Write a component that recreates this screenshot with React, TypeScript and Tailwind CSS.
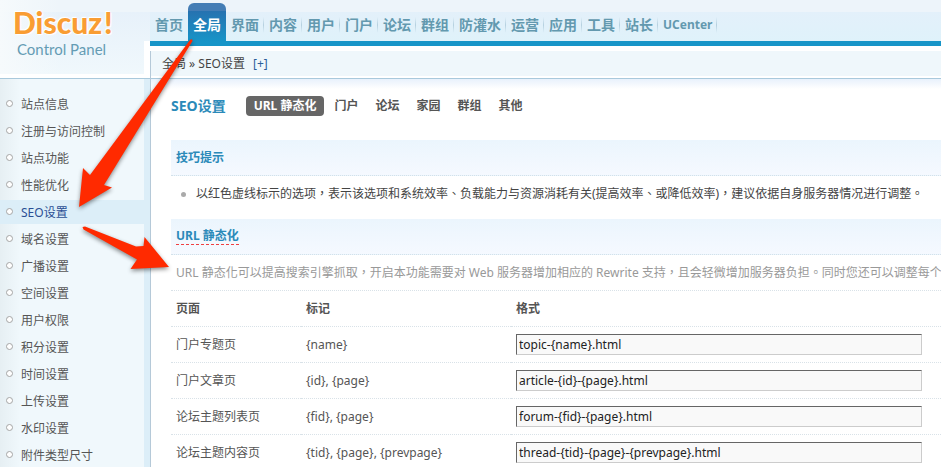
import React from "react";

const navItems = ["首页", "全局", "界面", "内容", "用户", "门户", "论坛", "群组", "防灌水", "运营", "应用", "工具", "站长", "UCenter"];

const menuItems = [
  "站点信息", "注册与访问控制", "站点功能", "性能优化", "SEO设置", "域名设置", "广播设置",
  "空间设置", "用户权限", "积分设置", "时间设置", "上传设置", "水印设置", "附件类型尺寸",
];

const tabs = ["URL 静态化", "门户", "论坛", "家园", "群组", "其他"];

const rules = [
  { page: "门户专题页", tags: "{name}", format: "topic-{name}.html" },
  { page: "门户文章页", tags: "{id}, {page}", format: "article-{id}-{page}.html" },
  { page: "论坛主题列表页", tags: "{fid}, {page}", format: "forum-{fid}-{page}.html" },
  { page: "论坛主题内容页", tags: "{tid}, {page}, {prevpage}", format: "thread-{tid}-{page}-{prevpage}.html" },
];

function Logo() {
  return (
    <div className="h-[78px] shrink-0 border-b-4 border-white pl-[13px] pt-1 font-[Lato,sans-serif] [background:linear-gradient(#fff,#fff)_144px_41px/6px_37px_no-repeat,linear-gradient(to_right,#f6fafc,transparent_60px),linear-gradient(#eef5fa_12px,#e7f1fa_12px,#f0f8fc)]">
      <div className="flex gap-0.5 text-3xl font-black leading-9 text-[#f99d33] [text-shadow:0_0_2px_#fff,0_0_3px_#fff,1px_1px_0_#fff,-1px_-1px_0_#fff]">
        <span>Discuz</span>
        <span>!</span>
      </div>
      <div className="pl-1 text-[15px] leading-[18px] text-[#649cb4]">Control Panel</div>
    </div>
  );
}

function Sidebar() {
  return (
    <aside className="flex w-[150px] shrink-0 flex-col">
      <Logo />
      <nav aria-label="全局" className="min-h-0 flex-1 border-t border-[#a9c9dc] bg-[#dceef8]">
        <ul className="h-full pt-[13px] [background:linear-gradient(to_right,#e6eff3,#f0f8fc_20px,#f0f8fc_144px,transparent_144px)]">
          {menuItems.map((item) => {
            const active = item === "SEO设置";
            return (
              <li key={item} className={active ? "mb-[3px] bg-[#dceef8]" : "mb-[3px]"}>
                <a href="#" className={`flex h-6 items-center gap-2 pl-1.5 pt-0.5 ${active ? "text-[#2b4e94]" : "text-[#555]"}`}>
                  <span className="mb-1 size-[7px] rounded-full border border-[#a5a5a5] bg-white" />
                  {item}
                </a>
              </li>
            );
          })}
        </ul>
      </nav>
    </aside>
  );
}

function TopNav() {
  return (
    <nav aria-label="主导航" className="h-[46px] border-b-[5px] border-[#1795c8] [background:linear-gradient(#edf4fa_12px,#e3f0fa_12px,#dff2fa_41px)]">
      <ul className="flex pt-[3px] text-sm font-bold">
        {navItems.map((item, i) => {
          const active = i === 1;
          return (
            <li
              key={item}
              className={
                active
                  ? "h-[43px] rounded-t-md text-white [background:linear-gradient(#447db5_8px,#2672b0_8px,#1795c8_39px)]"
                  : "h-[43px] text-[#6399af]"
              }
            >
              <a href="#" className={`flex h-full items-center gap-1 whitespace-nowrap pl-[5px] ${item === "UCenter" ? "text-xs" : ""}`}>
                {item}
                <span className={i < 2 ? "h-4 w-px" : "h-4 w-px bg-linear-to-b from-transparent via-[#b5d0df] to-transparent"} />
              </a>
            </li>
          );
        })}
      </ul>
    </nav>
  );
}

function SectionTitle({ children }: { children: React.ReactNode }) {
  return (
    <h2 className="flex h-9 items-center border-b border-dotted border-[#d3e1ea] bg-linear-to-b from-[#ebf5fd] to-[#f5f9ff] px-[5px] font-bold text-[#2b8ab9]">
      {children}
    </h2>
  );
}

function Rules() {
  const line = "h-9 border-b border-dotted border-[#d9e2e8] px-[5px] text-left";
  return (
    <table className="w-full table-fixed border-separate border-spacing-0">
      <colgroup>
        <col className="w-[130px]" />
        <col className="w-[210px]" />
        <col />
      </colgroup>
      <thead>
        <tr>
          <th className={line}>页面</th>
          <th className={line}>标记</th>
          <th className={line}>格式</th>
        </tr>
      </thead>
      <tbody>
        {rules.map((rule) => (
          <tr key={rule.page}>
            <td className={line}>{rule.page}</td>
            <td className={line}>{rule.tags}</td>
            <td className={line}>
              <input
                type="text"
                aria-label={rule.page}
                defaultValue={rule.format}
                className="block h-[21px] w-[406px] border border-b-[#ccc] border-l-[#666] border-r-[#ccc] border-t-[#666] bg-[#f9f9f9] px-0.5 text-[#222]"
              />
            </td>
          </tr>
        ))}
      </tbody>
    </table>
  );
}

function Arrows() {
  return (
    <svg
      aria-hidden="true"
      width="200"
      height="290"
      viewBox="0 0 200 290"
      className="pointer-events-none absolute left-0 top-0 drop-shadow-[0_2px_2px_rgba(0,0,0,0.45)]"
      fill="#ff2a00"
    >
      <path d="M190 40 Q192.500 38 192.500 41 L104 185 L112 187.500 L79 207 L83 168 L90 175 Z" />
      <path d="M82.500 227 L85 226.500 L136 246.500 L143.500 246 L144.500 237 L169 267 L130.500 269 L137 259.500 L83.500 229.500 Z" />
    </svg>
  );
}

export default function App() {
  return (
    <div className="relative flex h-screen overflow-hidden bg-white font-['Noto_Sans','Noto_Sans_CJK_SC',sans-serif] text-xs leading-[18px] text-[#555]">
      <Sidebar />
      <main className="min-w-0 flex-1">
        <TopNav />
        <div className="min-h-full border-l border-[#b5c9d8]">
          <div className="mt-[5px] flex h-[25px] items-center gap-2 bg-[#eff7fb] pl-[11px] text-[#444]">
            <span>全局 » SEO设置</span>
            <a href="#" className="text-[#2b5f99]">[+]</a>
          </div>
          <div className="mt-0.5 border-t border-[#a9c9dc] bg-[linear-gradient(#e8f1fc,#fff_10px)] pl-5">
            <div className="flex h-[61px] items-center pb-2">
              <h1 className="mr-5 text-sm font-bold text-[#2b8ab9]">SEO设置</h1>
              <div className="flex gap-[3px] font-bold">
                {tabs.map((tab, i) => (
                  <button
                    key={tab}
                    type="button"
                    className={i === 0 ? "h-5 rounded-sm bg-[#666] px-2 text-white" : "h-5 px-[7px] text-[#555]"}
                  >
                    {tab}
                  </button>
                ))}
              </div>
            </div>
            <SectionTitle>技巧提示</SectionTitle>
            <ul className="h-[43px] pl-2.5 pt-[9px] text-[#444]">
              <li className="flex items-center gap-2.5 whitespace-nowrap font-['Noto_Sans','Noto_Sans_CJK_TC',sans-serif]">
                <span className="size-[5px] rounded-full bg-[#aaa]" />
                以红色虚线标示的选项，表示该选项和系统效率、负载能力与资源消耗有关(提高效率、或降低效率)，建议依据自身服务器情况进行调整。
              </li>
            </ul>
            <SectionTitle>
              <span className="border-b border-dashed border-[#f04040] leading-4">URL 静态化</span>
            </SectionTitle>
            <p className="flex h-9 items-center overflow-hidden whitespace-nowrap border-b border-dotted border-[#d9e2e8] pl-[5px] font-['Noto_Sans','Noto_Sans_CJK_TC',sans-serif] text-[#999]">
              URL 静态化可以提高搜索引擎抓取，开启本功能需要对 Web 服务器增加相应的 Rewrite 支持，且会轻微增加服务器负担。同时您还可以调整每个
            </p>
            <Rules />
          </div>
        </div>
      </main>
      <Arrows />
    </div>
  );
}
